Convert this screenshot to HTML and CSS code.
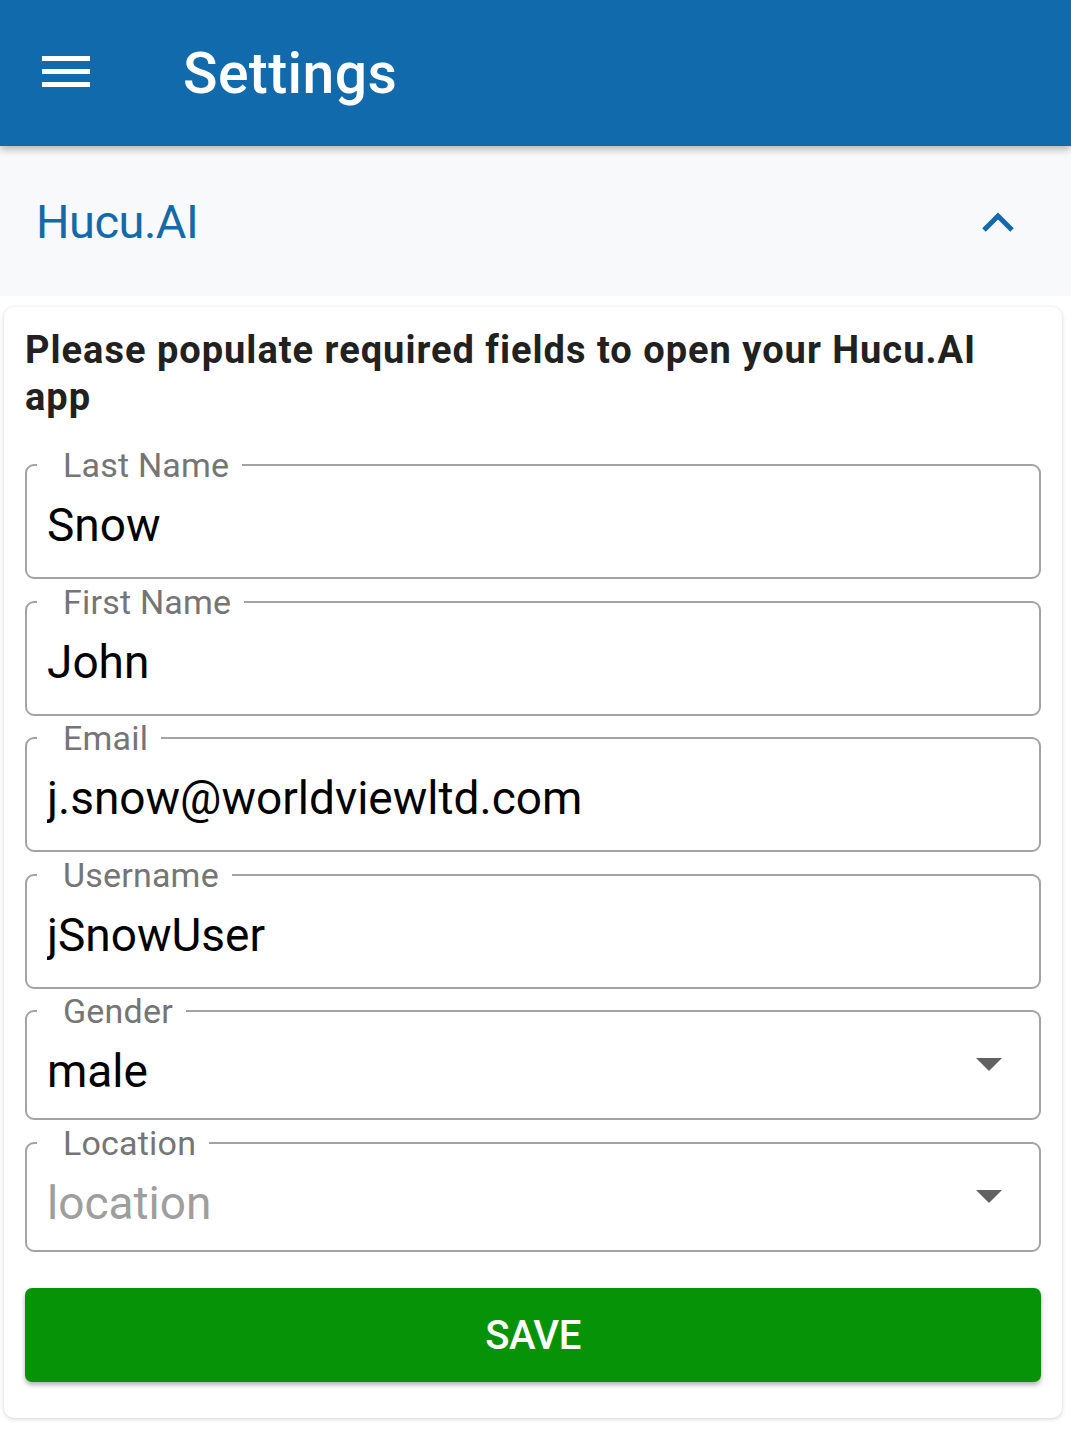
FILE: index.html
```html
<!DOCTYPE html>
<html lang="en">
<head>
    <meta charset="UTF-8">
    <meta name="viewport" content="width=device-width, initial-scale=1.0">
    <title>Settings</title>
    <link rel="stylesheet" href="styles.css">
</head>
<body>
    <header class="app-bar">
        <button class="menu-btn" aria-label="Menu">
            <svg width="48" height="32" viewBox="0 0 48 32">
                <rect x="0" y="0" width="48" height="5" fill="#fff"/>
                <rect x="0" y="13" width="48" height="5" fill="#fff"/>
                <rect x="0" y="26" width="48" height="5" fill="#fff"/>
            </svg>
        </button>
        <h1>Settings</h1>
    </header>

    <main>
        <div class="accordion-head">
            <span class="accordion-title">Hucu.AI</span>
            <svg class="chevron" width="34" height="22" viewBox="0 0 34 22">
                <polyline points="3,18 17,4 31,18" fill="none" stroke="#1469a8" stroke-width="5"/>
            </svg>
        </div>

        <section class="card">
            <h2>Please populate required fields to open your Hucu.AI app</h2>

            <form class="settings-form" onsubmit="return false">
                <fieldset class="field">
                    <legend>Last Name</legend>
                    <input type="text" value="Snow">
                </fieldset>
                <fieldset class="field">
                    <legend>First Name</legend>
                    <input type="text" value="John">
                </fieldset>
                <fieldset class="field">
                    <legend>Email</legend>
                    <input type="email" value="j.snow@worldviewltd.com">
                </fieldset>
                <fieldset class="field">
                    <legend>Username</legend>
                    <input type="text" value="jSnowUser">
                </fieldset>
                <fieldset class="field field-select">
                    <legend>Gender</legend>
                    <div class="select-wrap">
                        <select>
                            <option selected>male</option>
                            <option>female</option>
                        </select>
                        <span class="caret"></span>
                    </div>
                </fieldset>
                <fieldset class="field field-select">
                    <legend>Location</legend>
                    <div class="select-wrap">
                        <select class="placeholder">
                            <option selected>location</option>
                        </select>
                        <span class="caret"></span>
                    </div>
                </fieldset>

                <button class="save-btn" type="submit">SAVE</button>
            </form>
        </section>
    </main>
</body>
</html>
```

FILE: styles.css
```css
body {
    font-family: 'Roboto', 'Liberation Sans', sans-serif;
    margin: 0;
    padding: 0;
    background-color: #fff;
    color: #212121;
}

.app-bar {
    background: #116aab;
    height: 146px;
    display: flex;
    align-items: center;
    position: relative;
    z-index: 2;
    box-shadow: 0 3px 8px rgba(0, 0, 0, 0.3);
}

.menu-btn {
    background: none;
    border: none;
    padding: 0;
    margin-left: 42px;
    width: 48px;
    height: 32px;
    display: flex;
    margin-top: -2px;
}

.app-bar h1 {
    margin: 0 0 0 93px;
    color: #fff;
    font-size: 57px;
    font-weight: 500;
    letter-spacing: 0.4px;
}

.accordion-head {
    background: #f8f9fa;
    height: 150px;
    display: flex;
    align-items: center;
    justify-content: space-between;
    padding: 0 56px 0 36px;
}

.accordion-title {
    color: #1469a8;
    font-size: 47px;
    letter-spacing: -0.5px;
}

.chevron {
    margin-top: 4px;
}

.card {
    margin: 11px 9px 10px 4px;
    padding: 20px 21px 36px 21px;
    border-radius: 10px;
    background: #fff;
    box-shadow: 0 1px 4px rgba(0, 0, 0, 0.18);
}

.card h2 {
    margin: 0 0 26px;
    font-size: 38px;
    line-height: 47px;
    font-weight: 700;
    letter-spacing: 1px;
    color: #212121;
}

.settings-form {
    display: flex;
    flex-direction: column;
    gap: 4.5px;
}

.field {
    margin: 0;
    padding: 0 20px 24px 10px;
    border: 2px solid #a3a3a3;
    border-radius: 9px;
    min-width: 0;
}

.field legend {
    padding: 0 13px 0 26px;
    margin-left: 0;
    font-size: 34px;
    line-height: 36px;
    letter-spacing: 0.2px;
    color: #757575;
}

.field input,
.field select {
    display: block;
    width: 100%;
    box-sizing: border-box;
    border: none;
    outline: none;
    background: transparent;
    margin: 14px 0 0 10px;
    padding: 0;
    font-family: inherit;
    font-size: 46px;
    line-height: 56px;
    height: 56px;
    color: #000;
}

.field-select {
    padding-bottom: 19px;
}

.select-wrap {
    position: relative;
}

.field select {
    -webkit-appearance: none;
    appearance: none;
}

.field select.placeholder {
    color: #9e9e9e;
}

.caret {
    position: absolute;
    right: 17px;
    top: 15px;
    width: 0;
    height: 0;
    border-left: 13px solid transparent;
    border-right: 13px solid transparent;
    border-top: 13px solid #616161;
    pointer-events: none;
}

.save-btn {
    margin-top: 32px;
    height: 94px;
    border: none;
    border-radius: 7px;
    background: #079307;
    color: #fff;
    font-family: inherit;
    font-size: 40px;
    font-weight: 500;
    letter-spacing: -0.5px;
    box-shadow: 0 3px 5px rgba(0, 0, 0, 0.3);
    cursor: pointer;
}
```
